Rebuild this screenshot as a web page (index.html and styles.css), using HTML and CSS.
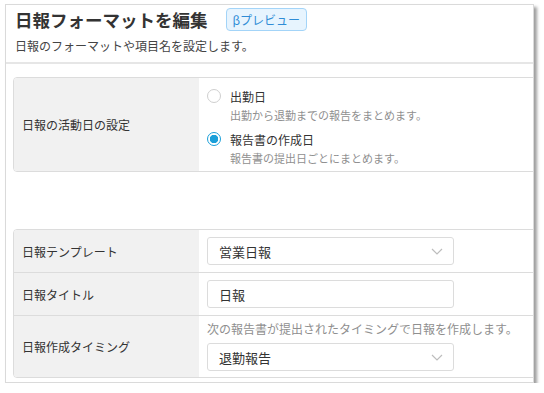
FILE: index.html
```html
<!DOCTYPE html>
<html lang="ja">
<head>
  <meta charset="UTF-8" />
  <title>日報フォーマットを編集</title>
  <link rel="stylesheet" href="styles.css">
</head>
<body>
  <div class="panel">
    <div class="panel-header">
      <div class="title-row">
        <h1>日報フォーマットを編集</h1>
        <span class="badge">βプレビュー</span>
      </div>
      <p class="subtitle">日報のフォーマットや項目名を設定します。</p>
    </div>

    <div class="panel-body">
      <div class="setting-box">
        <div class="setting-row">
          <div class="row-label">日報の活動日の設定</div>
          <div class="row-value radios">
            <div class="radio-option">
              <div class="radio-line"><span class="radio"></span>出勤日</div>
              <div class="radio-desc">出勤から退勤までの報告をまとめます。</div>
            </div>
            <div class="radio-option">
              <div class="radio-line"><span class="radio checked"></span>報告書の作成日</div>
              <div class="radio-desc">報告書の提出日ごとにまとめます。</div>
            </div>
          </div>
        </div>
      </div>

      <div class="setting-box second">
        <div class="setting-row">
          <div class="row-label">日報テンプレート</div>
          <div class="row-value">
            <div class="select">
              <span>営業日報</span>
              <svg class="chevron" width="12" height="7" viewBox="0 0 12 7"><path d="M1 1l5 5 5-5" fill="none" stroke="#bdbdbd" stroke-width="1.2"/></svg>
            </div>
          </div>
        </div>
        <div class="setting-row">
          <div class="row-label">日報タイトル</div>
          <div class="row-value">
            <div class="text-input">日報</div>
          </div>
        </div>
        <div class="setting-row">
          <div class="row-label">日報作成タイミング</div>
          <div class="row-value timing">
            <div class="hint">次の報告書が提出されたタイミングで日報を作成します。</div>
            <div class="select">
              <span>退勤報告</span>
              <svg class="chevron" width="12" height="7" viewBox="0 0 12 7"><path d="M1 1l5 5 5-5" fill="none" stroke="#bdbdbd" stroke-width="1.2"/></svg>
            </div>
          </div>
        </div>
      </div>
    </div>
  </div>
</body>
</html>
```
FILE: styles.css
```css
* {
  box-sizing: border-box;
  margin: 0;
  padding: 0;
}
body {
  background: #fff;
  color: #333;
  font-family: "Noto Sans CJK JP", sans-serif;
}
.panel {
  width: 529px;
  height: 379px;
  margin: 4px 0 0 5px;
  background: #fff;
  border: 1px solid #dadada;
  box-shadow: 3px 3px 3px rgba(0, 0, 0, 0.38);
  overflow: hidden;
}
.panel-header {
  padding: 3px 9px 7px 9px;
  border-bottom: 2px solid #e6e6e6;
}
.title-row {
  display: flex;
  align-items: center;
  height: 23px;
}
h1 {
  font-size: 17.5px;
  font-weight: 700;
  line-height: 23px;
  color: #333;
}
.badge {
  margin-left: 18px;
  height: 23px;
  line-height: 21px;
  padding: 0 6px;
  font-size: 12px;
  color: #2f8cd6;
  background: #e7f4fe;
  border: 1px solid #a3d4f8;
  border-radius: 4px;
}
.subtitle {
  margin-top: 6px;
  font-size: 12px;
  line-height: 18px;
  color: #444;
}
.panel-body {
  padding: 13px 0 0 7px;
}
.setting-box {
  margin-right: -20px;
  border: 1px solid #dcdcdc;
  border-radius: 4px;
  overflow: hidden;
}
.setting-box.second {
  margin-top: 57px;
}
.setting-row {
  display: flex;
  border-top: 1px solid #dcdcdc;
}
.setting-row:first-child {
  border-top: none;
}
.row-label {
  width: 185px;
  flex-shrink: 0;
  display: flex;
  align-items: center;
  padding-left: 8px;
  background: #f1f1f1;
  font-size: 12px;
  color: #333;
}
.row-value {
  flex: 1;
  padding: 7px 8px;
}
.radios {
  padding: 8px 8px 4px;
  display: flex;
  flex-direction: column;
  gap: 5px;
}
.radio-line {
  display: flex;
  align-items: center;
  height: 20px;
  font-size: 12px;
  color: #333;
}
.radio {
  width: 14px;
  height: 14px;
  margin-right: 9px;
  border: 1px solid #cfcfcf;
  border-radius: 50%;
  background: #fff;
}
.radio.checked {
  border-color: #1a9fd9;
  background: radial-gradient(circle, #1a9fd9 0 4px, #fff 4.5px);
}
.radio-desc {
  padding-left: 23px;
  font-size: 11px;
  line-height: 18px;
  color: #8f8f8f;
}
.select, .text-input {
  width: 247px;
  height: 28px;
  display: flex;
  align-items: center;
  justify-content: space-between;
  padding: 0 10px 0 11px;
  border: 1px solid #dcdcdc;
  border-radius: 3px;
  background: #fff;
  font-size: 13px;
  color: #333;
}
.timing {
  padding: 4px 8px 6px;
}
.hint {
  font-size: 12px;
  line-height: 18px;
  color: #8f8f8f;
  margin-bottom: 5px;
  white-space: nowrap;
}
```
